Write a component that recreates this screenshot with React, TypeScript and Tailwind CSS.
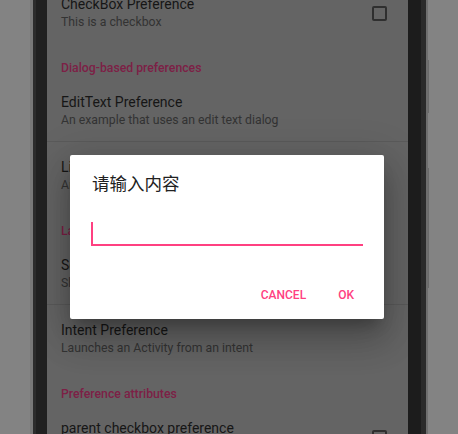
type Row =
  | { kind: "category"; title: string }
  | { kind: "item"; title: string; summary: string; checkbox?: boolean; divider?: boolean };

const rows: Row[] = [
  { kind: "item", title: "CheckBox Preference", summary: "This is a checkbox", checkbox: true },
  { kind: "category", title: "Dialog-based preferences" },
  { kind: "item", title: "EditText Preference", summary: "An example that uses an edit text dialog", divider: true },
  { kind: "item", title: "List Preference", summary: "An example that uses a list dialog" },
  { kind: "category", title: "Launch preferences" },
  { kind: "item", title: "Screen preference", summary: "Shows another screen of preferences", divider: true },
  { kind: "item", title: "Intent Preference", summary: "Launches an Activity from an intent" },
  { kind: "category", title: "Preference attributes" },
  { kind: "item", title: "parent checkbox preference", summary: "This is visually a parent", checkbox: true },
];

function Screen() {
  return (
    <div className="relative w-[361px] shrink-0 overflow-hidden bg-[#646464]">
      {/* preference list, dimmed behind the dialog */}
      <div className="-mt-[21px] flex flex-col">
        {rows.map((r, i) =>
          r.kind === "category" ? (
            <div key={i} className="pl-[14px] pt-[16px] text-[12.25px] leading-[18px] font-medium text-[#7d2046]">
              {r.title}
            </div>
          ) : (
            <div key={i} className={r.divider ? "border-b border-[#5a5a5a]" : ""}>
              <div className="flex items-center pl-[14px] pr-[21px] pt-[16px] pb-[12px]">
                <div className="flex min-w-0 flex-1 flex-col whitespace-nowrap">
                  <span className="text-[14px] leading-[18px] text-[#161616]">{r.title}</span>
                  <span className="text-[12.25px] leading-[18px] text-[#333333]">{r.summary}</span>
                </div>
                {r.checkbox && <div className="size-[15px] rounded-[2px] border-2 border-[#2f2f2f]" />}
              </div>
            </div>
          )
        )}
      </div>

      {/* dialog */}
      <div className="absolute left-[23px] top-[155px] flex h-[164px] w-[314px] flex-col rounded-[2px] bg-white shadow-[0_10px_14px_-6px_rgba(0,0,0,0.25),0_21px_34px_3px_rgba(0,0,0,0.16),0_8px_40px_7px_rgba(0,0,0,0.14)]">
        <div className="px-[22px] pt-[17px] text-[17.5px] leading-[24px] text-[#212121]">请输入内容</div>
        <div className="mx-[21px] mt-[26px] flex h-[24px] items-start border-b-2 border-[#ff4081]">
          <div className="h-[22px] w-[2px] bg-[#ff4081]" />
        </div>
        <div className="flex justify-end pt-[33px] pb-[8px] pr-[14px]">
          <button type="button" className="px-4 py-[8px] text-[12px] leading-[16px] font-medium text-[#ff4081]">
            CANCEL
          </button>
          <button type="button" className="px-4 py-[8px] text-[12px] leading-[16px] font-medium text-[#ff4081]">
            OK
          </button>
        </div>
      </div>
    </div>
  );
}

export default function App() {
  return (
    <div className="flex h-[434px] w-[458px] overflow-hidden bg-[#838383] font-['Roboto','Noto_Sans_CJK_SC',sans-serif]">
      {/* left bezel */}
      <div className="ml-[30px] w-[3px] shrink-0 bg-[#787878]" />
      <div className="w-[3px] shrink-0 bg-[#2c2c2c]" />
      <div className="w-[11px] shrink-0 bg-[#202020]" />
      <Screen />
      {/* right bezel */}
      <div className="w-[13px] shrink-0 bg-[#1c1c1c]" />
      <div className="w-[5px] shrink-0 bg-[#2a2a2a]" />
      <div className="w-[2px] shrink-0 bg-[#6e6e6e]" />
      {/* side buttons */}
      <div className="flex w-[1px] shrink-0 flex-col">
        <div className="mt-[60px] h-[53px] bg-[#6a6a6a]" />
        <div className="mt-[55px] h-[120px] bg-[#6a6a6a]" />
      </div>
    </div>
  );
}
